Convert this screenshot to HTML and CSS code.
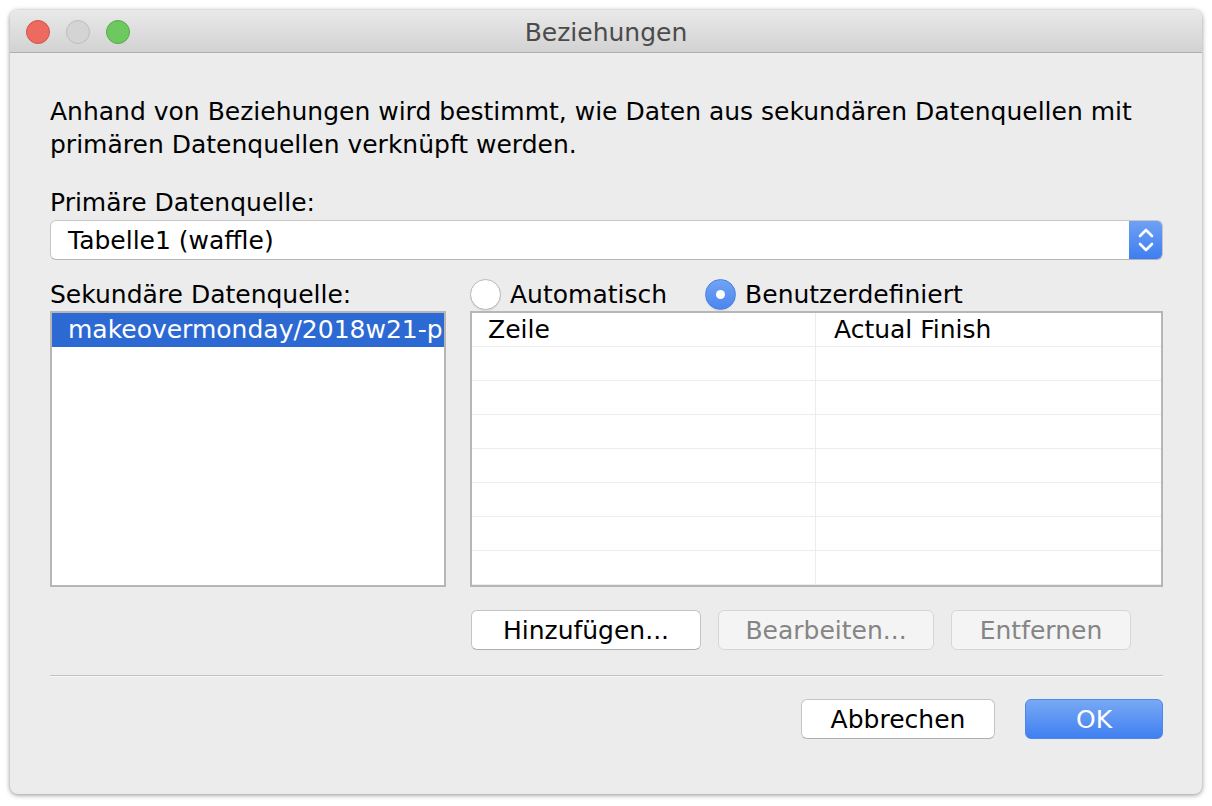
FILE: index.html
```html
<!DOCTYPE html>
<html lang="de">
<head>
    <meta charset="UTF-8" />
    <title>Beziehungen</title>
    <link rel="stylesheet" href="styles.css">
</head>
<body>
    <div class="window">
        <div class="title-bar">
            <div class="traffic">
                <span class="light close"></span>
                <span class="light minimize"></span>
                <span class="light zoom"></span>
            </div>
            <div class="title">Beziehungen</div>
        </div>

        <div class="content">
            <p class="intro">Anhand von Beziehungen wird bestimmt, wie Daten aus sekundären Datenquellen mit primären Datenquellen verknüpft werden.</p>

            <div class="label">Primäre Datenquelle:</div>
            <div class="select">
                <span class="select-value">Tabelle1 (waffle)</span>
                <span class="stepper">
                    <svg width="18" height="26" viewBox="0 0 18 26">
                        <path d="M3 9 L9 3 L15 9" fill="none" stroke="#fff" stroke-width="2.6" stroke-linecap="round" stroke-linejoin="round"/>
                        <path d="M3 17 L9 23 L15 17" fill="none" stroke="#fff" stroke-width="2.6" stroke-linecap="round" stroke-linejoin="round"/>
                    </svg>
                </span>
            </div>

            <div class="columns">
                <div class="left-col">
                    <div class="label">Sekundäre Datenquelle:</div>
                    <div class="list">
                        <div class="list-item selected">makeovermonday/2018w21-preview</div>
                    </div>
                </div>

                <div class="right-col">
                    <div class="radios">
                        <label class="radio"><span class="radio-dot"></span>Automatisch</label>
                        <label class="radio checked"><span class="radio-dot"></span>Benutzerdefiniert</label>
                    </div>
                    <div class="table">
                        <div class="row head">
                            <div class="cell">Zeile</div>
                            <div class="cell">Actual Finish</div>
                        </div>
                        <div class="row"><div class="cell"></div><div class="cell"></div></div>
                        <div class="row"><div class="cell"></div><div class="cell"></div></div>
                        <div class="row"><div class="cell"></div><div class="cell"></div></div>
                        <div class="row"><div class="cell"></div><div class="cell"></div></div>
                        <div class="row"><div class="cell"></div><div class="cell"></div></div>
                        <div class="row"><div class="cell"></div><div class="cell"></div></div>
                        <div class="row"><div class="cell"></div><div class="cell"></div></div>
                    </div>
                    <div class="table-buttons">
                        <button class="btn add">Hinzufügen...</button>
                        <button class="btn edit" disabled>Bearbeiten...</button>
                        <button class="btn remove" disabled>Entfernen</button>
                    </div>
                </div>
            </div>

            <div class="separator"></div>

            <div class="footer-buttons">
                <button class="btn cancel">Abbrechen</button>
                <button class="btn ok">OK</button>
            </div>
        </div>
    </div>
</body>
</html>
```

FILE: styles.css
```css
body {
    margin: 0;
    background: #ffffff;
    font-family: "DejaVu Sans", "Noto Sans", sans-serif;
    font-size: 25px;
    color: #000;
}

.window {
    margin: 10px;
    width: 1192px;
    height: 784px;
    background: #ececec;
    border-radius: 8px;
    box-shadow: 0 1px 5px rgba(0,0,0,0.45);
    overflow: hidden;
    display: flex;
    flex-direction: column;
}

/* Titelleiste */
.title-bar {
    height: 43px;
    box-sizing: border-box;
    padding-top: 2px;
    flex: none;
    background: linear-gradient(#e9e9e9, #d2d2d2);
    border-bottom: 1px solid #b0b0b0;
    display: flex;
    align-items: center;
    position: relative;
}

.traffic {
    display: flex;
    gap: 16px;
    padding-left: 16px;
}

.light {
    width: 24px;
    height: 24px;
    border-radius: 50%;
    box-sizing: border-box;
}

.light.close {
    background: #ec6a5f;
    border: 1px solid #d2544a;
}

.light.minimize {
    background: #d4d4d4;
    border: 1px solid #bdbdbd;
}

.light.zoom {
    background: #6dc95f;
    border: 1px solid #56ab48;
}

.title {
    position: absolute;
    left: 0;
    right: 0;
    top: 8px;
    text-align: center;
    color: #4b4b4b;
    pointer-events: none;
}

/* Inhalt */
.content {
    padding: 42px 39px 0 40px;
    display: flex;
    flex-direction: column;
}

.intro {
    margin: 0;
    line-height: 33px;
    padding-right: 20px;
}

.label {
    line-height: 33px;
}

.content > .label {
    margin-top: 25px;
}

.select {
    margin-top: 1px;
    height: 40px;
    box-sizing: border-box;
    background: #fff;
    border: 1px solid #c6c6c6;
    border-bottom-color: #b4b4b4;
    border-radius: 6px;
    display: flex;
    align-items: center;
    overflow: hidden;
}

.select-value {
    flex: 1;
    padding-left: 17px;
}

.stepper {
    width: 33px;
    height: 100%;
    background: linear-gradient(#6fa0f3, #3e7ef1);
    display: flex;
    align-items: center;
    justify-content: center;
}

.columns {
    display: flex;
    gap: 24px;
    margin-top: 18px;
}

.left-col {
    width: 396px;
    display: flex;
    flex-direction: column;
}

.right-col {
    flex: 1;
    display: flex;
    flex-direction: column;
}

.list {
    height: 276px;
    box-sizing: border-box;
    border: 2px solid #b6b6b6;
    background: #fff;
    overflow: hidden;
}

.list-item {
    height: 34px;
    line-height: 34px;
    padding-left: 16px;
    white-space: nowrap;
    overflow: hidden;
}

.list-item.selected {
    background: #2c69d2;
    color: #fff;
}

.radios {
    height: 33px;
    display: flex;
    align-items: center;
    gap: 38px;
}

.radio {
    display: flex;
    align-items: center;
    gap: 9px;
}

.radio-dot {
    width: 31px;
    height: 31px;
    box-sizing: border-box;
    border-radius: 50%;
    background: #fff;
    border: 1px solid #b9b9b9;
    box-shadow: 0 1px 1px rgba(0,0,0,0.08);
    position: relative;
}

.radio.checked .radio-dot {
    background: linear-gradient(#71a4f5, #4a86ee);
    border-color: #4a82e4;
}

.radio.checked .radio-dot::after {
    content: "";
    position: absolute;
    left: 10px;
    top: 10px;
    width: 9px;
    height: 9px;
    border-radius: 50%;
    background: #fff;
}

.table {
    height: 276px;
    box-sizing: border-box;
    border: 2px solid #b6b6b6;
    background: #fff;
    overflow: hidden;
}

.row {
    display: flex;
    height: 34px;
    box-sizing: border-box;
    border-bottom: 1px solid #ececec;
}

.cell {
    line-height: 33px;
    padding-left: 16px;
}

.cell:first-child {
    width: 344px;
    box-sizing: border-box;
    border-right: 1px solid #ececec;
}

.cell:last-child {
    padding-left: 18px;
}

.table-buttons {
    display: flex;
    gap: 17px;
    margin-top: 23px;
    padding-left: 1px;
}

.btn {
    font-family: inherit;
    font-size: 25px;
    height: 40px;
    box-sizing: border-box;
    background: #fff;
    color: #000;
    border: 1px solid #c4c4c4;
    border-bottom-color: #aeaeae;
    border-radius: 6px;
    padding: 0;
}

.btn:disabled {
    background: #f4f4f4;
    color: #858585;
    border-color: #d6d6d6;
}

.btn.add { width: 230px; }
.btn.edit { width: 216px; }
.btn.remove { width: 180px; }

.separator {
    margin-top: 25px;
    height: 1px;
    background: #c2c2c2;
    border-bottom: 1px solid #f8f8f8;
}

.footer-buttons {
    display: flex;
    justify-content: flex-end;
    gap: 30px;
    margin-top: 22px;
}

.btn.cancel { width: 194px; }

.btn.ok {
    width: 138px;
    color: #fff;
    border: 1px solid #4d86ec;
    background: linear-gradient(#78a9f5, #3f7ff0);
}
```
